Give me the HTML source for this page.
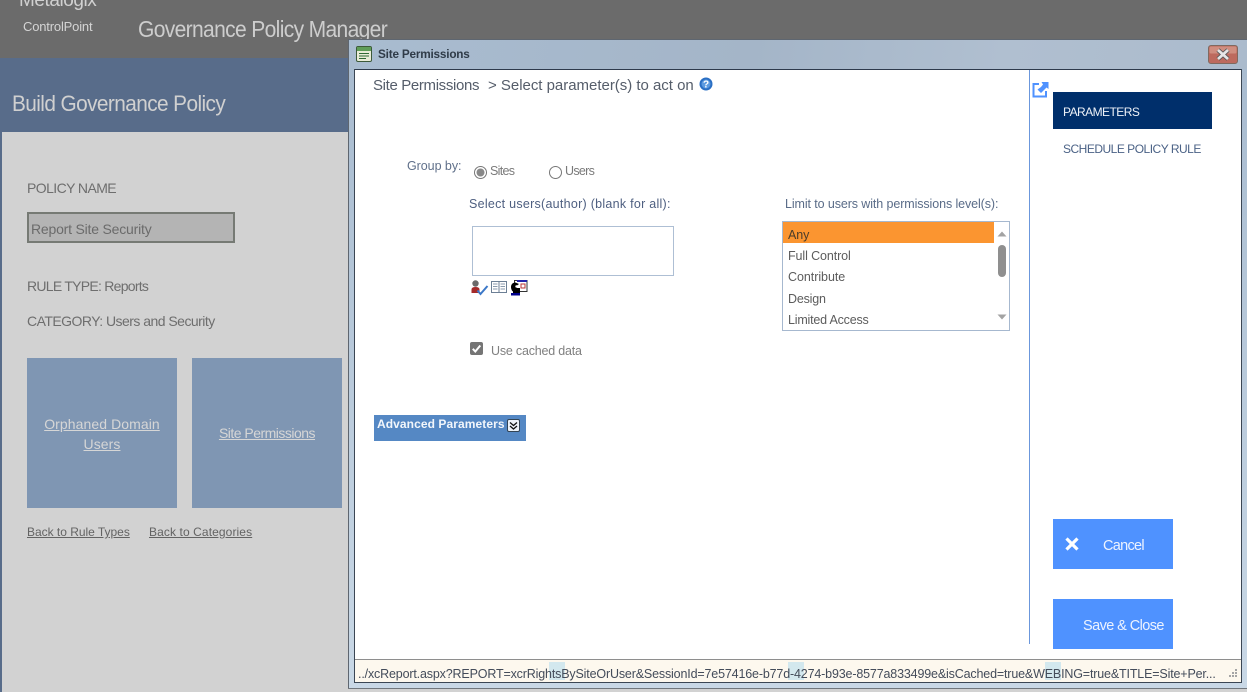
<!DOCTYPE html>
<html><head><meta charset="utf-8"><style>
html,body{margin:0;padding:0;width:1247px;height:692px;overflow:hidden;background:#d2d2d2}
body{position:relative;font-family:"Liberation Sans",sans-serif}
div,span.a,a,svg{position:absolute}
.t{white-space:nowrap;line-height:1;font-weight:400}
</style></head><body>
<div style="left:0;top:0;width:1247px;height:58px;background:#6b6b6b"></div>
<div style="left:0;top:58px;width:1247px;height:74px;background:#586c8a"></div>
<div style="left:0;top:132px;width:2px;height:560px;background:#586c8a"></div>
<div class="t" style="left:19px;top:-9px;font-size:19px;letter-spacing:-.45px;color:#d0d0d0">Metalogix</div>
<div class="t" style="left:23px;top:20px;font-size:13px;letter-spacing:-.18px;color:#d4d4d4">ControlPoint</div>
<div class="t" style="left:138px;top:18px;font-size:23px;letter-spacing:-.72px;color:#cdcdcd;transform:scaleX(.915);transform-origin:left">Governance Policy Manager</div>
<div class="t" style="left:12px;top:93px;font-size:22.5px;letter-spacing:-.65px;color:#d0d0d0;transform:scaleX(.926);transform-origin:left">Build Governance Policy</div>

<div class="t" style="left:27px;top:181px;font-size:14px;letter-spacing:-.58px;color:#6e6e6e">POLICY NAME</div>
<div style="left:27px;top:212px;width:204px;height:27px;background:#b4b4b4;border:2px solid #767a74"></div>
<div class="t" style="left:31px;top:222px;font-size:14px;letter-spacing:-.2px;color:#6b6b6b">Report Site Security</div>
<div class="t" style="left:27px;top:279px;font-size:14px;letter-spacing:-.73px;color:#6e6e6e">RULE TYPE: Reports</div>
<div class="t" style="left:27px;top:314px;font-size:14px;letter-spacing:-.53px;color:#6e6e6e">CATEGORY: Users and Security</div>

<div style="left:27px;top:358px;width:150px;height:150px;background:#7f96b3"></div>
<div style="left:192px;top:358px;width:150px;height:150px;background:#7f96b3"></div>
<div class="t" style="left:27px;top:414px;width:150px;text-align:center;font-size:14px;letter-spacing:.08px;line-height:20px;color:#d6d6d6;text-decoration:underline;white-space:normal">Orphaned Domain<br>Users</div>
<div class="t" style="left:192px;top:426px;width:150px;text-align:center;font-size:14px;letter-spacing:-.51px;color:#d6d6d6;text-decoration:underline">Site Permissions</div>
<div class="t" style="left:27px;top:526px;font-size:12px;letter-spacing:-.02px;color:#636363;text-decoration:underline">Back to Rule Types</div>
<div class="t" style="left:149px;top:526px;font-size:12px;letter-spacing:.1px;color:#636363;text-decoration:underline">Back to Categories</div>

<!-- dialog frame -->
<div style="left:348px;top:39px;width:899px;height:649px;box-sizing:border-box;border:1px solid #5e6670;border-right:0;background:linear-gradient(100deg,#a9bcd0 0%,#a4b5c8 40%,#b0bfd0 65%,#a9b9cb 100%)"></div>
<div style="left:349px;top:682px;width:898px;height:6px;background:#c9d8e6"></div>
<div style="left:349px;top:69px;width:6px;height:613px;background:linear-gradient(180deg,#a9bcd0,#c9d8e6)"></div>
<div style="left:1241px;top:69px;width:6px;height:619px;background:linear-gradient(180deg,#a9bcd0,#c9d8e6)"></div>
<div style="left:348px;top:688px;width:899px;height:1px;background:#70767c"></div>
<svg style="left:356px;top:46px" width="16" height="16" viewBox="0 0 16 16"><rect x=".5" y=".5" width="15" height="15" rx="1.5" fill="#e9ecd8" stroke="#3d5a3a"/><rect x="1" y="1" width="14" height="4" fill="#5f9d58"/><path d="M3 7.5h10M3 10h10M3 12.5h7" stroke="#2f6a35" stroke-width="1"/></svg>
<div class="t" style="left:378px;top:48px;font-size:12px;font-weight:700;letter-spacing:-.2px;color:#2f3b48;transform:scaleX(.98);transform-origin:left">Site Permissions</div>
<svg style="left:1208px;top:45px" width="30" height="20" viewBox="0 0 30 20"><rect x=".5" y=".5" width="29" height="18" rx="2.5" fill="#bd6a5e" stroke="#80695f"/><rect x="1.5" y="1.5" width="27" height="7" rx="1.5" fill="#cf8e80"/><path d="M10 5L20 14M20 5L10 14" stroke="#555" stroke-width="4.500"/><path d="M10 5L20 14M20 5L10 14" stroke="#e6e6e6" stroke-width="2.800"/></svg>

<!-- content -->
<div style="left:355px;top:69px;width:886px;height:591px;background:#fff;border-top:1px solid #2e3a4c;box-sizing:border-box"></div>
<div style="left:354px;top:69px;width:1px;height:614px;background:#3b4654"></div>
<div style="left:1241px;top:69px;width:1px;height:614px;background:#3b4654"></div>
<div style="left:355px;top:682px;width:887px;height:1px;background:#3b4654"></div>

<div class="t" style="left:373px;top:78px;font-size:15px;letter-spacing:-.35px;color:#555d6a">Site Permissions</div>
<div class="t" style="left:488px;top:78px;font-size:15px;letter-spacing:-.02px;color:#555d6a">&gt; Select parameter(s) to act on</div>
<svg style="left:699px;top:77px" width="14" height="14" viewBox="0 0 14 14"><circle cx="7" cy="7" r="6.500" fill="#2a6fc4"/><circle cx="7" cy="7" r="4.500" fill="#5d9be0"/><text x="7" y="10.500" text-anchor="middle" font-size="10" font-weight="700" font-family="Liberation Sans" fill="#fff">?</text></svg>

<div style="left:1029px;top:70px;width:1px;height:574px;background:#6b97dc"></div>
<svg style="left:1032px;top:81px" width="17" height="17" viewBox="0 0 17 17"><path d="M7 3H1.500V15.500H14V10" fill="none" stroke="#4f92ff" stroke-width="2"/><path d="M5.500 8.500L9 6 11 3.500 9.500 1H16.500V8L14.500 6.500 12 9 9 12z" fill="#4f92ff"/></svg>
<div style="left:1053px;top:92px;width:159px;height:37px;background:#002f6b"></div>
<div class="t" style="left:1063px;top:106px;font-size:12px;letter-spacing:-.55px;color:#eef2f8">PARAMETERS</div>
<div class="t" style="left:1063px;top:143px;font-size:12px;letter-spacing:-.5px;color:#4b6286">SCHEDULE POLICY RULE</div>

<div class="t" style="left:407px;top:160px;font-size:12.500px;letter-spacing:-.05px;color:#60708a">Group by:</div>
<svg style="left:473px;top:165px" width="15" height="15" viewBox="0 0 15 15"><circle cx="7.500" cy="7.500" r="6" fill="#fff" stroke="#777"/><circle cx="7.500" cy="7.500" r="4" fill="#888"/></svg>
<div class="t" style="left:490px;top:165px;font-size:12.500px;letter-spacing:-.7px;color:#7a7a7a">Sites</div>
<svg style="left:548px;top:165px" width="15" height="15" viewBox="0 0 15 15"><circle cx="7.500" cy="7.500" r="6" fill="#fff" stroke="#777"/></svg>
<div class="t" style="left:565px;top:165px;font-size:12.500px;letter-spacing:-.7px;color:#7a7a7a">Users</div>
<div class="t" style="left:469px;top:198px;font-size:12.500px;letter-spacing:.27px;color:#4e5f80">Select users(author) (blank for all):</div>
<div style="left:472px;top:226px;width:202px;height:50px;box-sizing:border-box;border:1px solid #aebfd4;background:#fff"></div>
<svg style="left:471px;top:279px" width="58" height="18" viewBox="0 0 58 18"><circle cx="4.500" cy="4.500" r="3.200" fill="#6a6a6a"/><path d="M.5 14V10.500Q.5 8 4.500 8T8.500 10.500V14z" fill="#a52a2a"/><path d="M6.500 11.500l3 3.500 7-8" fill="none" stroke="#3c78c8" stroke-width="2"/><rect x="20.500" y="2.500" width="7.500" height="11" fill="#fff" stroke="#6c7f95"/><rect x="28" y="2.500" width="7.500" height="11" fill="#fff" stroke="#6c7f95"/><path d="M22 5h4.500M22 7.500h4.500M22 10h4.500M29.500 5h4.500M29.500 7.500h4.500M29.500 10h4.500" stroke="#8a9aac"/><rect x="43.500" y="1.500" width="12.500" height="11" fill="#fff" stroke="#333"/><rect x="46" y="1" width="10" height="2" fill="#2222aa"/><rect x="50" y="5" width="4" height="4" fill="#fff" stroke="#b33"/><path d="M44.500 3.500C41.500 3.500 40 5.500 40 8s1.500 4.500 2 4.500V14h7V9H46V6.500L48 5z" fill="#000"/><circle cx="45.500" cy="7.500" r="1.200" fill="#fff"/><path d="M40 16.500h9v-2.500h-9z" fill="#00008b"/></svg>

<div class="t" style="left:785px;top:198px;font-size:12.500px;letter-spacing:-.1px;color:#5a6c88">Limit to users with permissions level(s):</div>
<div style="left:782px;top:221px;width:228px;height:110px;box-sizing:border-box;border:1px solid #a6b8cf;background:#fff"></div>
<div style="left:783px;top:222px;width:211px;height:21px;background:#fb9530"></div>
<div class="t" style="left:788px;top:229px;font-size:12.500px;color:#4a3c2a;letter-spacing:-.1px">Any</div>
<div class="t" style="left:788px;top:250px;font-size:12.500px;color:#5c5c5c;letter-spacing:-.1px">Full Control</div>
<div class="t" style="left:788px;top:271px;font-size:12.500px;color:#5c5c5c;letter-spacing:-.05px">Contribute</div>
<div class="t" style="left:788px;top:293px;font-size:12.500px;color:#5c5c5c;letter-spacing:-.2px">Design</div>
<div class="t" style="left:788px;top:314px;font-size:12.500px;color:#5c5c5c;letter-spacing:-.2px">Limited Access</div>
<svg style="left:995px;top:222px" width="14" height="108" viewBox="0 0 14 108"><path d="M2.500 14.500L7 9.500l4.500 5z" fill="#a3a3a3"/><rect x="3" y="23" width="8" height="32" rx="4" fill="#8f8f8f"/><path d="M2.500 92.500L7 97.500l4.500-5z" fill="#a3a3a3"/></svg>

<svg style="left:470px;top:342px" width="13" height="13" viewBox="0 0 13 13"><rect width="13" height="13" rx="2" fill="#757575"/><path d="M2.800 6.800l2.500 2.700 5-6" fill="none" stroke="#fff" stroke-width="2"/></svg>
<div class="t" style="left:491px;top:345px;font-size:12.500px;letter-spacing:-.2px;color:#808080">Use cached data</div>

<div style="left:374px;top:415px;width:152px;height:26px;background:#5588c4"></div>
<div class="t" style="left:377px;top:418px;font-size:12px;font-weight:700;letter-spacing:.08px;color:#f2f6fb">Advanced Parameters</div>
<svg style="left:507px;top:419px" width="13" height="13" viewBox="0 0 13 13"><rect x=".5" y=".5" width="12" height="12" rx="1.500" fill="#edf2f8" stroke="#345"/><path d="M3 3.500l3.500 3 3.500-3M3 7l3.500 3 3.500-3" fill="none" stroke="#111" stroke-width="1.300"/></svg>

<div style="left:1053px;top:519px;width:120px;height:50px;background:#4f92ff"></div>
<svg style="left:1064px;top:536px" width="16" height="16" viewBox="0 0 16 16"><path d="M2.500 2.500L13.500 13.500M13.500 2.500L2.500 13.500" stroke="#fff" stroke-width="3.200"/></svg>
<div class="t" style="left:1103px;top:539px;font-size:14.500px;letter-spacing:-.7px;color:#edf3ff">Cancel</div>
<div style="left:1053px;top:599px;width:120px;height:50px;background:#4f92ff"></div>
<div class="t" style="left:1083px;top:619px;font-size:14.500px;letter-spacing:-.58px;color:#edf3ff">Save &amp; Close</div>

<!-- status bar -->
<div style="left:355px;top:659px;width:886px;height:23px;background:#fdf8ee;border-top:1px solid #8e8e8e;box-sizing:border-box"></div>
<div style="left:549px;top:662px;width:16px;height:18px;background:#d3e8ee"></div>
<div style="left:788px;top:662px;width:16px;height:18px;background:#d3e8ee"></div>
<div style="left:1045px;top:662px;width:16px;height:18px;background:#d3e8ee"></div>
<div class="t" style="left:358px;top:668px;font-size:12.500px;letter-spacing:-.16px;color:#444c5a">../xcReport.aspx?REPORT=xcrRightsBySiteOrUser&amp;SessionId=7e57416e-b77d-4274-b93e-8577a833499e&amp;isCached=true&amp;WEBING=true&amp;TITLE=Site+Per...</div>
<svg style="left:1228px;top:668px" width="10" height="10" viewBox="0 0 10 10"><path d="M7 1h2v2H7zM4 4h2v2H4zM7 4h2v2H7zM1 7h2v2H1zM4 7h2v2H4zM7 7h2v2H7z" fill="#a5a5a5"/></svg>
</body></html>
